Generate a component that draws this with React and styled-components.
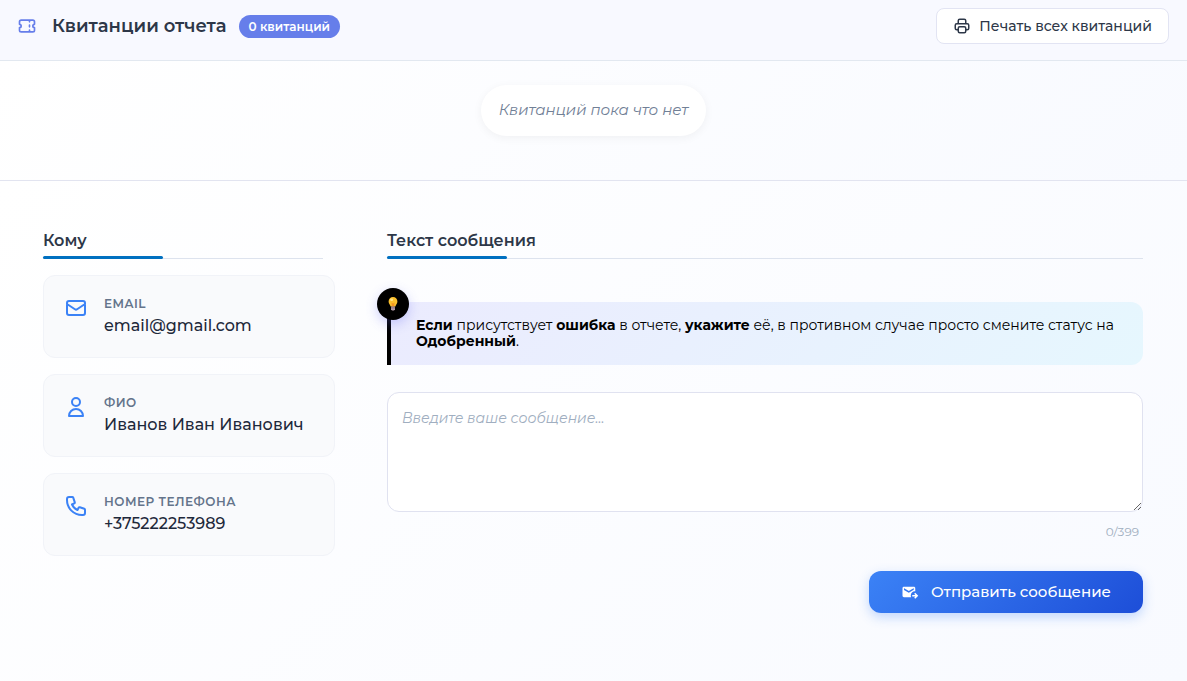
import { useState } from "react"
import styled, { createGlobalStyle } from "styled-components"
import {
  HiOutlineTicket,
  HiOutlinePrinter,
  HiOutlineMail,
  HiOutlineUser,
  HiOutlinePhone,
} from "react-icons/hi"
import { MdOutgoingMail } from "react-icons/md"

const MAX_LENGTH = 399

const GlobalStyle = createGlobalStyle`
  * {
    box-sizing: border-box;
    margin: 0;
    padding: 0;
  }

  body {
    font-family: "Montserrat", "Inter", sans-serif;
    color: #2d3748;
    background: #fbfcff;
  }

  button,
  textarea {
    font-family: inherit;
  }
`

const Page = styled.div`
  min-height: 100vh;
  display: flex;
  flex-direction: column;
`

const Header = styled.header`
  display: flex;
  align-items: center;
  justify-content: space-between;
  padding: 8px 18px 16px 17px;
  background: #f8f9ff;
  border-bottom: 1px solid #e2e8f0;
`

const HeaderTitle = styled.div`
  display: flex;
  align-items: center;

  svg {
    color: #667eea;
    margin-right: 15px;
  }

  h1 {
    font-size: 18px;
    line-height: 24px;
    font-weight: 600;
    margin-right: 12px;
  }
`

const Badge = styled.span`
  padding: 0 10px;
  border-radius: 12px;
  background: #667eea;
  color: #fff;
  font-size: 12px;
  line-height: 23px;
  font-weight: 600;
`

const PrintButton = styled.button`
  display: flex;
  align-items: center;
  gap: 8px;
  height: 36px;
  padding: 0 16px;
  border: 1px solid #e2e4f3;
  border-radius: 8px;
  background: #fff;
  color: #2d3748;
  font-size: 14px;
  font-weight: 500;
  cursor: pointer;
`

const Receipts = styled.section`
  display: flex;
  justify-content: center;
  padding: 24px 24px 44px;
  background: linear-gradient(135deg, #fff, #f8faff);
  border-bottom: 1px solid #e2e4f0;
`

const EmptyText = styled.p`
  padding: 15px 18px 16px;
  border-radius: 26px;
  background: #fff;
  box-shadow: 0 2px 10px rgba(0, 0, 0, 0.05);
  color: #718096;
  font-size: 15px;
  line-height: 20px;
  font-style: italic;
`

const Content = styled.main`
  flex: 1;
  display: grid;
  grid-template-columns: 292px 1fr;
  gap: 52px;
  padding: 48px 44px 48px 43px;
  background: linear-gradient(135deg, #fff, #f8faff);
`

const SectionTitle = styled.h2`
  margin-right: ${(props) => props.$inset || 0}px;
  border-bottom: 1px solid #dde3ee;
  font-size: 16px;
  line-height: 24px;
  font-weight: 600;

  &::after {
    content: "";
    display: block;
    width: 120px;
    height: 3px;
    margin: 3px 0 -1px;
    border-radius: 2px;
    background: #0070c0;
  }
`

const ContactList = styled.ul`
  display: flex;
  flex-direction: column;
  gap: 16px;
  margin-top: 16px;
  list-style: none;
`

const ContactCard = styled.li`
  display: flex;
  gap: 16px;
  padding: 20px;
  border: 1px solid #f1f3f8;
  border-radius: 12px;
  background: #f9fafc;

  svg {
    color: #3b82f6;
    flex-shrink: 0;
  }
`

const ContactLabel = styled.div`
  color: #64748b;
  font-size: 12px;
  line-height: 16px;
  font-weight: 600;
  letter-spacing: 0.5px;
  text-transform: uppercase;
`

const ContactValue = styled.div`
  margin-top: 3px;
  color: #1e293b;
  font-size: 16px;
  line-height: 22px;
  font-weight: 500;
  white-space: nowrap;
`

const Notice = styled.div`
  position: relative;
  margin-top: 43px;
  padding: 15px 25px 16px;
  border-left: 4px solid #000;
  border-radius: 0 12px 12px 0;
  background: linear-gradient(135deg, #ebebfe, #e6f7fe);
  color: #000;
  font-size: 14px;
  line-height: 16px;
`

const NoticeIcon = styled.span`
  position: absolute;
  top: -14px;
  left: -14px;
  display: flex;
  align-items: center;
  justify-content: center;
  width: 32px;
  height: 32px;
  border-radius: 50%;
  background: #000;
  box-shadow: 0 4px 12px rgba(99, 102, 241, 0.3);
`

const MessageForm = styled.form`
  display: flex;
  flex-direction: column;
  margin-top: 27px;
`

const MessageInput = styled.textarea`
  width: 100%;
  height: 120px;
  padding: 15px 14px;
  border: 1px solid #e0e2f0;
  border-radius: 12px;
  background: #fff;
  color: #2d3748;
  font-size: 14px;
  line-height: 20px;
  resize: vertical;

  &::placeholder {
    color: #a0aec0;
    font-style: italic;
  }
`

const Counter = styled.div`
  margin: 12px 4px 0;
  color: #a0aec0;
  font-size: 12px;
  line-height: 16px;
  text-align: right;
`

const SendButton = styled.button`
  align-self: flex-end;
  display: flex;
  align-items: center;
  gap: 12px;
  height: 42px;
  margin-top: 31px;
  padding: 0 32px;
  border: none;
  border-radius: 12px;
  background: linear-gradient(135deg, #3b82f6, #1d4ed8);
  box-shadow: 0 4px 12px rgba(59, 130, 246, 0.3);
  color: #fff;
  font-size: 15px;
  line-height: 20px;
  font-weight: 500;
  cursor: pointer;
`

const BulbIcon = () => (
  <svg width="10" height="14" viewBox="0 0 10 14" aria-hidden="true">
    <path
      d="M5 0a4.4 4.4 0 0 0-4.4 4.4c0 2.2 1.5 2.9 2 5.1h4.8c.5-2.2 2-2.9 2-5.1A4.4 4.4 0 0 0 5 0z"
      fill="#fbc02d"
    />
    <path d="M3.9 9.5 3.4 5.6 5 6.4l1.6-.8-.5 3.9z" fill="#f59322" />
    <ellipse cx="3.6" cy="2.8" rx="1.5" ry="1.3" fill="#ffe58a" />
    <path d="M3 9.5h4v2.7L6 13.6H4l-1-1.4z" fill="#b39aa8" />
    <path d="M3 10.9h4" stroke="#75606f" strokeWidth="0.7" />
  </svg>
)

const contacts = [
  { label: "Email", value: "email@gmail.com", Icon: HiOutlineMail },
  { label: "ФИО", value: "Иванов Иван Иванович", Icon: HiOutlineUser },
  { label: "Номер телефона", value: "+375222253989", Icon: HiOutlinePhone },
]

const App = () => {
  const [message, setMessage] = useState("")

  const handleSubmit = (event) => {
    event.preventDefault()
    setMessage("")
  }

  return (
    <Page>
      <GlobalStyle />
      <Header>
        <HeaderTitle>
          <HiOutlineTicket size={20} />
          <h1>Квитанции отчета</h1>
          <Badge>0 квитанций</Badge>
        </HeaderTitle>
        <PrintButton type="button">
          <HiOutlinePrinter size={18} />
          Печать всех квитанций
        </PrintButton>
      </Header>

      <Receipts>
        <EmptyText>Квитанций пока что нет</EmptyText>
      </Receipts>

      <Content>
        <section>
          <SectionTitle $inset={12}>Кому</SectionTitle>
          <ContactList>
            {contacts.map(({ label, value, Icon }) => (
              <ContactCard key={label}>
                <Icon size={24} />
                <div>
                  <ContactLabel>{label}</ContactLabel>
                  <ContactValue>{value}</ContactValue>
                </div>
              </ContactCard>
            ))}
          </ContactList>
        </section>

        <section>
          <SectionTitle id="message-title">Текст сообщения</SectionTitle>
          <Notice>
            <NoticeIcon>
              <BulbIcon />
            </NoticeIcon>
            <b>Если</b> присутствует <b>ошибка</b> в отчете, <b>укажите</b> её,
            в противном случае просто смените статус на <b>Одобренный</b>.
          </Notice>
          <MessageForm onSubmit={handleSubmit}>
            <MessageInput
              name="message"
              aria-labelledby="message-title"
              placeholder="Введите ваше сообщение..."
              maxLength={MAX_LENGTH}
              value={message}
              onChange={({ target }) => setMessage(target.value)}
            />
            <Counter>
              {message.length}/{MAX_LENGTH}
            </Counter>
            <SendButton>
              <MdOutgoingMail size={18} />
              Отправить сообщение
            </SendButton>
          </MessageForm>
        </section>
      </Content>
    </Page>
  )
}

export default App
